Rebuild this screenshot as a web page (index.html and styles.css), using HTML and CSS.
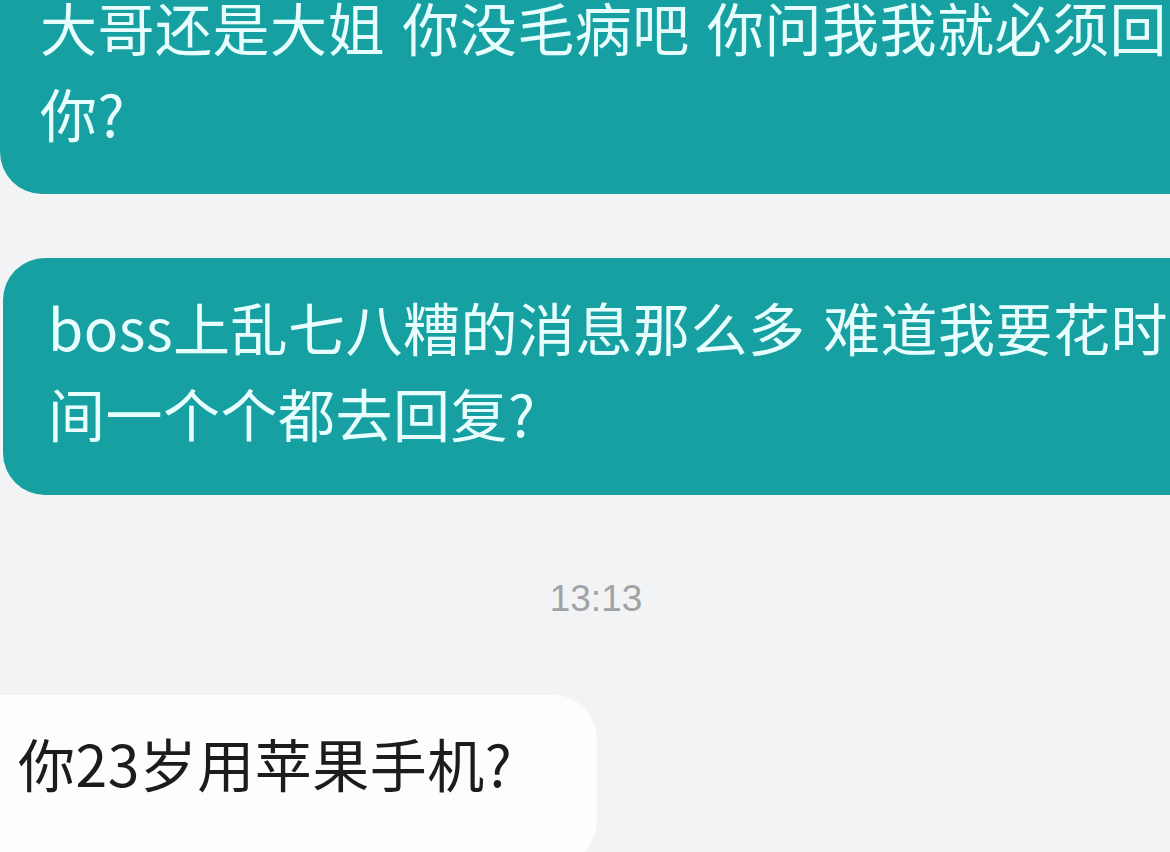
FILE: index.html
```html
<!DOCTYPE html>
<html>

<head>
    <meta charset="UTF-8">
    <meta name="viewport" content="width=device-width, initial-scale=1.0">
    <link rel="stylesheet" href="styles.css">
</head>

<body>
    <div class="chat">
        <div class="bubble bubble-mine first">
            大哥还是大姐 你没毛病吧 你问我我就必须回<br>你?
        </div>
        <div class="bubble bubble-mine second">
            boss上乱七八糟的消息那么多 难道我要花时<br>间一个个都去回复?
        </div>
        <div class="time">13:13</div>
        <div class="bubble bubble-other">
            你23岁用苹果手机?
        </div>
    </div>
</body>

</html>
```
FILE: styles.css
```css
body {
    margin: 0;
    padding: 0;
    background-color: #f2f3f5;
    font-family: "Noto Sans CJK SC", "Noto Sans", sans-serif;
    overflow: hidden;
    height: 852px;
}

.chat {
    display: flex;
    flex-direction: column;
    align-items: flex-start;
}

.bubble {
    font-size: 57px;
    line-height: 86px;
    letter-spacing: 0.5px;
    word-spacing: 4px;
    white-space: nowrap;
}

/* teal bubbles run off the right side of the picture */
.bubble-mine {
    background-color: #16a0a2;
    color: #e8fdfd;
    width: 1240px;
    border-radius: 42px;
}

.first {
    margin-top: -42px;
    padding: 25px 0 39px 40px;
}

.second {
    margin-top: 64px;
    margin-left: 3px;
    padding: 25px 0 40px 45px;
}

.time {
    align-self: center;
    margin-top: 82px;
    padding-left: 22px;
    font-family: "Liberation Sans", Arial, sans-serif;
    font-size: 37px;
    line-height: 44px;
    color: #a2a2a4;
}

.bubble-other {
    margin-top: 74px;
    background-color: #fdfdff;
    color: #1c1c1e;
    width: 579px;
    padding: 24px 0 60px 18px;
    border-radius: 0 44px 44px 0;
}
```
